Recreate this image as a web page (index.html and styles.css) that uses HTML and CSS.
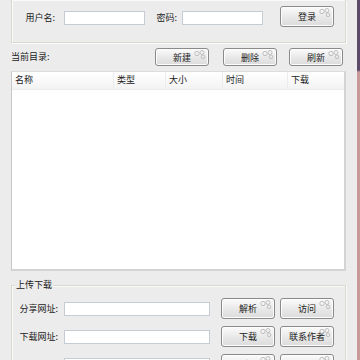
FILE: index.html
```html
<!DOCTYPE html>
<html>
<head>
<meta charset="utf-8">
<link rel="stylesheet" href="styles.css">
</head>
<body>
<div class="app">
  <div class="main">
    <div class="group top-group">
      <span class="lbl lbl-user">用户名:</span>
      <span class="input in-user"></span>
      <span class="lbl lbl-pass">密码:</span>
      <span class="input in-pass"></span>
      <button class="btn btn-login">登录<svg class="swirl" viewBox="0 0 12 9"><circle cx="3" cy="3.5" r="2.2"/><circle cx="8" cy="2.5" r="2"/><circle cx="9" cy="6.8" r="1.8"/></svg></button>
    </div>

    <div class="dir-row">
      <span class="dir-lbl">当前目录:</span>
      <div class="dir-btns">
        <button class="btn btn-sm">新建<svg class="swirl" viewBox="0 0 12 9"><circle cx="3" cy="3.5" r="2.2"/><circle cx="8" cy="2.5" r="2"/><circle cx="9" cy="6.8" r="1.8"/></svg></button>
        <button class="btn btn-sm">删除<svg class="swirl" viewBox="0 0 12 9"><circle cx="3" cy="3.5" r="2.2"/><circle cx="8" cy="2.5" r="2"/><circle cx="9" cy="6.8" r="1.8"/></svg></button>
        <button class="btn btn-sm">刷新<svg class="swirl" viewBox="0 0 12 9"><circle cx="3" cy="3.5" r="2.2"/><circle cx="8" cy="2.5" r="2"/><circle cx="9" cy="6.8" r="1.8"/></svg></button>
      </div>
    </div>

    <div class="list">
      <div class="list-head">
        <span class="col c1">名称</span>
        <span class="col c2">类型</span>
        <span class="col c3">大小</span>
        <span class="col c4">时间</span>
        <span class="col c5">下载</span>
      </div>
    </div>

    <div class="group bottom-group">
      <span class="legend">上传下载</span>
      <div class="row">
        <span class="lbl lbl-url">分享网址:</span>
        <span class="input in-url"></span>
        <button class="btn btn-b">解析<svg class="swirl" viewBox="0 0 12 9"><circle cx="3" cy="3.5" r="2.2"/><circle cx="8" cy="2.5" r="2"/><circle cx="9" cy="6.8" r="1.8"/></svg></button>
        <button class="btn btn-b">访问<svg class="swirl" viewBox="0 0 12 9"><circle cx="3" cy="3.5" r="2.2"/><circle cx="8" cy="2.5" r="2"/><circle cx="9" cy="6.8" r="1.8"/></svg></button>
      </div>
      <div class="row">
        <span class="lbl lbl-url">下载网址:</span>
        <span class="input in-url"></span>
        <button class="btn btn-b">下载<svg class="swirl" viewBox="0 0 12 9"><circle cx="3" cy="3.5" r="2.2"/><circle cx="8" cy="2.5" r="2"/><circle cx="9" cy="6.8" r="1.8"/></svg></button>
        <button class="btn btn-b">联系作者<svg class="swirl" viewBox="0 0 12 9"><circle cx="3" cy="3.5" r="2.2"/><circle cx="8" cy="2.5" r="2"/><circle cx="9" cy="6.8" r="1.8"/></svg></button>
      </div>
      <div class="row">
        <span class="lbl lbl-url">上传文件:</span>
        <span class="input in-url"></span>
        <button class="btn btn-b">浏览<svg class="swirl" viewBox="0 0 12 9"><circle cx="3" cy="3.5" r="2.2"/><circle cx="8" cy="2.5" r="2"/><circle cx="9" cy="6.8" r="1.8"/></svg></button>
        <button class="btn btn-b">上传<svg class="swirl" viewBox="0 0 12 9"><circle cx="3" cy="3.5" r="2.2"/><circle cx="8" cy="2.5" r="2"/><circle cx="9" cy="6.8" r="1.8"/></svg></button>
      </div>
    </div>
  </div>
  <div class="strip"></div>
</div>
</body>
</html>
```

FILE: styles.css
```css
html, body {
  margin: 0;
  padding: 0;
  width: 360px;
  height: 360px;
  overflow: hidden;
  background: #ececec;
  font-family: "Noto Sans CJK SC", "Noto Sans", sans-serif;
  font-size: 9px;
  color: #222;
}
.app {
  display: flex;
  width: 360px;
  height: 360px;
}
.main {
  width: 357px;
  height: 360px;
  box-sizing: border-box;
  padding: 0 11px 0 11px;
  display: flex;
  flex-direction: column;
  background: #ececec;
  overflow: hidden;
}
.main > * { flex-shrink: 0; }
.strip {
  width: 3px;
  height: 360px;
  background: linear-gradient(#5b4a68 0, #5b4a68 70px, #c99898 72px, #c99898 100%);
}
.group {
  border: 1px solid #d9d9ce;
  box-shadow: inset 1px 1px 0 #fafafa, 1px 1px 0 #fafafa;
  box-sizing: border-box;
}
.top-group {
  height: 43px;
  border-top: none;
  display: flex;
  align-items: flex-start;
  padding-top: 6px;
}
.lbl {
  display: inline-block;
  text-align: right;
  line-height: 14px;
  white-space: nowrap;
}
.lbl-user { width: 43px; margin-top: 5px; margin-right: 9px; }
.lbl-pass { width: 32px; margin-top: 5px; margin-right: 5px; }
.input {
  display: inline-block;
  box-sizing: border-box;
  height: 14px;
  background: #fff;
  border: 1px solid #c5ccd6;
}
.in-user, .in-pass { width: 81px; margin-top: 5px; }
.btn {
  position: relative;
  box-sizing: border-box;
  border: 1px solid #8a8a8a;
  border-radius: 3px;
  background: linear-gradient(#fbfbfb, #e6e6e6 60%, #dcdcdc);
  box-shadow: inset 0 0 0 1px #fdfdfd;
  font-family: inherit;
  font-size: 9px;
  color: #222;
  padding: 0;
  margin: 0;
  text-align: center;
}
.swirl {
  position: absolute;
  top: 1px;
  right: 2px;
  width: 12px;
  height: 9px;
  fill: none;
  stroke: #b9b9b9;
  stroke-width: 0.9;
}
.btn-login {
  width: 54px;
  height: 21px;
  margin-left: 17px;
}
.dir-row {
  display: flex;
  align-items: center;
  height: 18px;
  margin-top: 5px;
}
.dir-lbl {
  width: 144px;
  line-height: 18px;
}
.dir-btns {
  display: flex;
  gap: 14px;
}
.btn-sm {
  width: 54px;
  height: 18px;
}
.dir-btns .btn-sm:last-child { margin-left: -2px; }
.list {
  margin-top: 5px;
  height: 200px;
  background: #fff;
  border: 1px solid #dcdcdc;
  border-left-color: #c8c8c8;
  border-bottom: 2px solid #d4d4d4;
  border-right: 2px solid #d4d4d4;
  box-sizing: border-box;
}
.list-head {
  display: flex;
  height: 17px;
  background: linear-gradient(#ffffff, #f3f3f3);
  border-bottom: 1px solid #ececec;
}
.col {
  line-height: 16px;
  padding-left: 3px;
  box-sizing: border-box;
  border-right: 1px solid #ececec;
}
.c1 { width: 102px; }
.c2 { width: 52px; }
.c3 { width: 57px; }
.c4 { width: 65px; }
.c5 { flex: 1; border-right: none; }
.bottom-group {
  position: relative;
  margin-top: 14px;
  height: 90px;
  border-bottom: none;
  padding-top: 12px;
  display: flex;
  flex-direction: column;
  gap: 7px;
}
.legend {
  position: absolute;
  top: -7px;
  left: 3px;
  padding: 0 1px;
  background: #ececec;
  line-height: 12px;
}
.row {
  display: flex;
  align-items: center;
  height: 21px;
  flex-shrink: 0;
}
.lbl-url { width: 46px; margin-right: 6px; }
.in-url { width: 146px; }
.btn-b {
  width: 54px;
  height: 21px;
  margin-left: 11px;
}
.row .btn-b:last-child { margin-left: 5px; }
```
